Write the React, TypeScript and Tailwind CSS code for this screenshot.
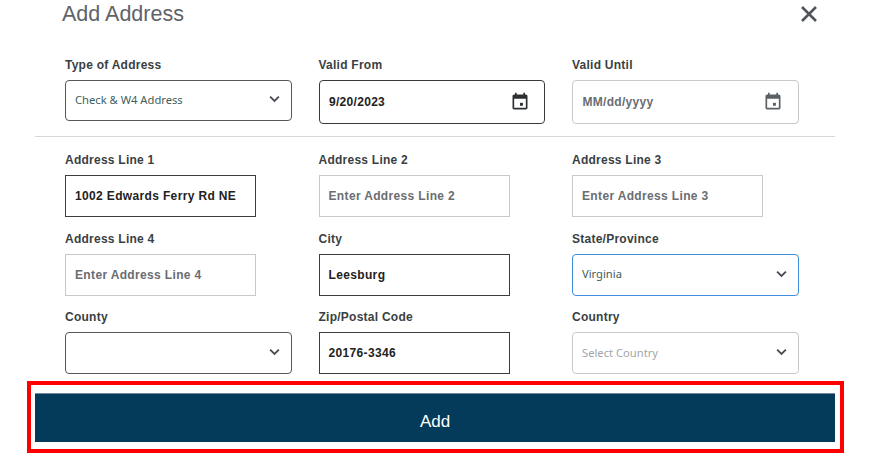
import React from "react";

const labelCls = "block text-[12px] leading-[17px] font-bold tracking-[0.25px] text-[#3a3f44] font-['Liberation_Sans',sans-serif]";

function Chevron({ color = "#4a4d55" }: { color?: string }) {
  return (
    <svg viewBox="0 0 12 8" className="w-[11px] h-[8px] shrink-0" fill="none">
      <path d="M1.2 1.4 6 6l4.8-4.6" stroke={color} strokeWidth="2.1" />
    </svg>
  );
}

function Calendar({ color }: { color: string }) {
  return (
    <svg viewBox="0 0 24 24" className="w-[20px] h-[20px] shrink-0" fill={color}>
      <path d="M16 1v2H8V1H6v2H5c-1.11 0-2 .9-2 2v14c0 1.1.89 2 2 2h14c1.1 0 2-.9 2-2V5c0-1.1-.9-2-2-2h-1V1h-2zm3 18H5V8h14v11z" />
      <path d="M12 13h3.5v3.5H12z" />
    </svg>
  );
}

function Field({ label, children, top = "" }: { label: string; children: React.ReactNode; top?: string }) {
  return (
    <div className={top}>
      <label className={labelCls}>{label}</label>
      {children}
    </div>
  );
}

function TextBox({ value, placeholder }: { value?: string; placeholder?: string }) {
  return (
    <div
      className={`w-[191px] h-[42px] mt-[6px] flex items-center pl-[9px] pr-[10px] border font-['Liberation_Sans',sans-serif] text-[12px] font-bold tracking-[0.35px] ${
        value ? "border-[#3c3c3c] text-[#222222]" : "border-[#c9c9c9] text-[#6a6d72]"
      }`}
    >
      {value ?? placeholder}
    </div>
  );
}

function SelectBox({
  value,
  border = "border-[#55585c]",
  text = "text-[#40605c]",
  box = "mt-[6px] h-[42px]",
}: {
  value?: string;
  border?: string;
  text?: string;
  box?: string;
}) {
  return (
    <div
      className={`w-[226.5px] flex items-center justify-between pl-[9px] pr-[11px] rounded-[4px] border bg-white ${box} ${border}`}
    >
      <span className={`text-[11.2px] font-['Noto_Sans','Open_Sans',sans-serif] ${text}`}>{value}</span>
      <span className="-mt-[2px]">
        <Chevron />
      </span>
    </div>
  );
}

function DateBox({
  value,
  placeholder,
  active,
}: {
  value?: string;
  placeholder?: string;
  active?: boolean;
}) {
  return (
    <div
      className={`w-[226.5px] h-[44.5px] mt-[5.5px] flex items-center justify-between pl-[9.5px] pr-[14.5px] rounded-[4px] border ${
        active ? "border-[#3a3a3a]" : "border-[#c9c9c9]"
      }`}
    >
      <span
        className={`text-[12px] font-bold tracking-[0.3px] font-['Liberation_Sans',sans-serif] ${
          active ? "text-[#222222]" : "text-[#6a6d72]"
        }`}
      >
        {value ?? placeholder}
      </span>
      <Calendar color={active ? "#2d3033" : "#5b6065"} />
    </div>
  );
}

export default function App() {
  return (
    <div className="w-[871px] h-[468px] bg-white overflow-hidden font-['Liberation_Sans',sans-serif]">
      <div className="h-[28px] flex items-center justify-between pl-[62px] pr-[54px]">
        <h1 className="text-[21.5px] leading-[28px] text-[#5f6368] font-normal">Add Address</h1>
        <svg viewBox="0 0 16 16" className="w-[16px] h-[16px]" fill="none">
          <path d="M1 1 15 15M15 1 1 15" stroke="#50555c" strokeWidth="2.6" />
        </svg>
      </div>

      <div className="grid grid-cols-[253.5px_253.5px_253.5px] pl-[65px] pt-[29px]">
        <Field label="Type of Address">
          <SelectBox value="Check & W4 Address" box="mt-[5.5px] h-[41.5px]" />
        </Field>
        <Field label="Valid From">
          <DateBox value="9/20/2023" active />
        </Field>
        <Field label="Valid Until">
          <DateBox placeholder="MM/dd/yyyy" />
        </Field>
      </div>

      <div className="ml-[35px] mr-[36px] mt-[12px] h-px bg-[#d5d8da]" />

      <div className="grid grid-cols-[253.5px_253.5px_253.5px] pl-[65px] pt-[15px]">
        <Field label="Address Line 1">
          <TextBox value="1002 Edwards Ferry Rd NE" />
        </Field>
        <Field label="Address Line 2">
          <TextBox placeholder="Enter Address Line 2" />
        </Field>
        <Field label="Address Line 3">
          <TextBox placeholder="Enter Address Line 3" />
        </Field>

        <Field label="Address Line 4" top="mt-[13.5px]">
          <TextBox placeholder="Enter Address Line 4" />
        </Field>
        <Field label="City" top="mt-[13.5px]">
          <TextBox value="Leesburg" />
        </Field>
        <Field label="State/Province" top="mt-[13.5px]">
          <SelectBox value="Virginia" border="border-[#3f8fdc]" />
        </Field>

        <Field label="County" top="mt-[13.5px]">
          <SelectBox />
        </Field>
        <Field label="Zip/Postal Code" top="mt-[13.5px]">
          <TextBox value="20176-3346" />
        </Field>
        <Field label="Country" top="mt-[13.5px]">
          <SelectBox value="Select Country" border="border-[#c9c9c9]" text="text-[#a3a5a8]" />
        </Field>
      </div>

      <div className="ml-[27px] mt-[7px] w-[817px] h-[72px] border-4 border-[#ff0000] pt-[8px] pb-[7px] pl-[4px] pr-[5px]">
        <button className="w-full h-[49px] pt-[8px] bg-[#043b5a] border-t border-[#6f8a9b] text-white text-[17px] font-['Liberation_Sans',sans-serif]">
          Add
        </button>
      </div>
    </div>
  );
}
